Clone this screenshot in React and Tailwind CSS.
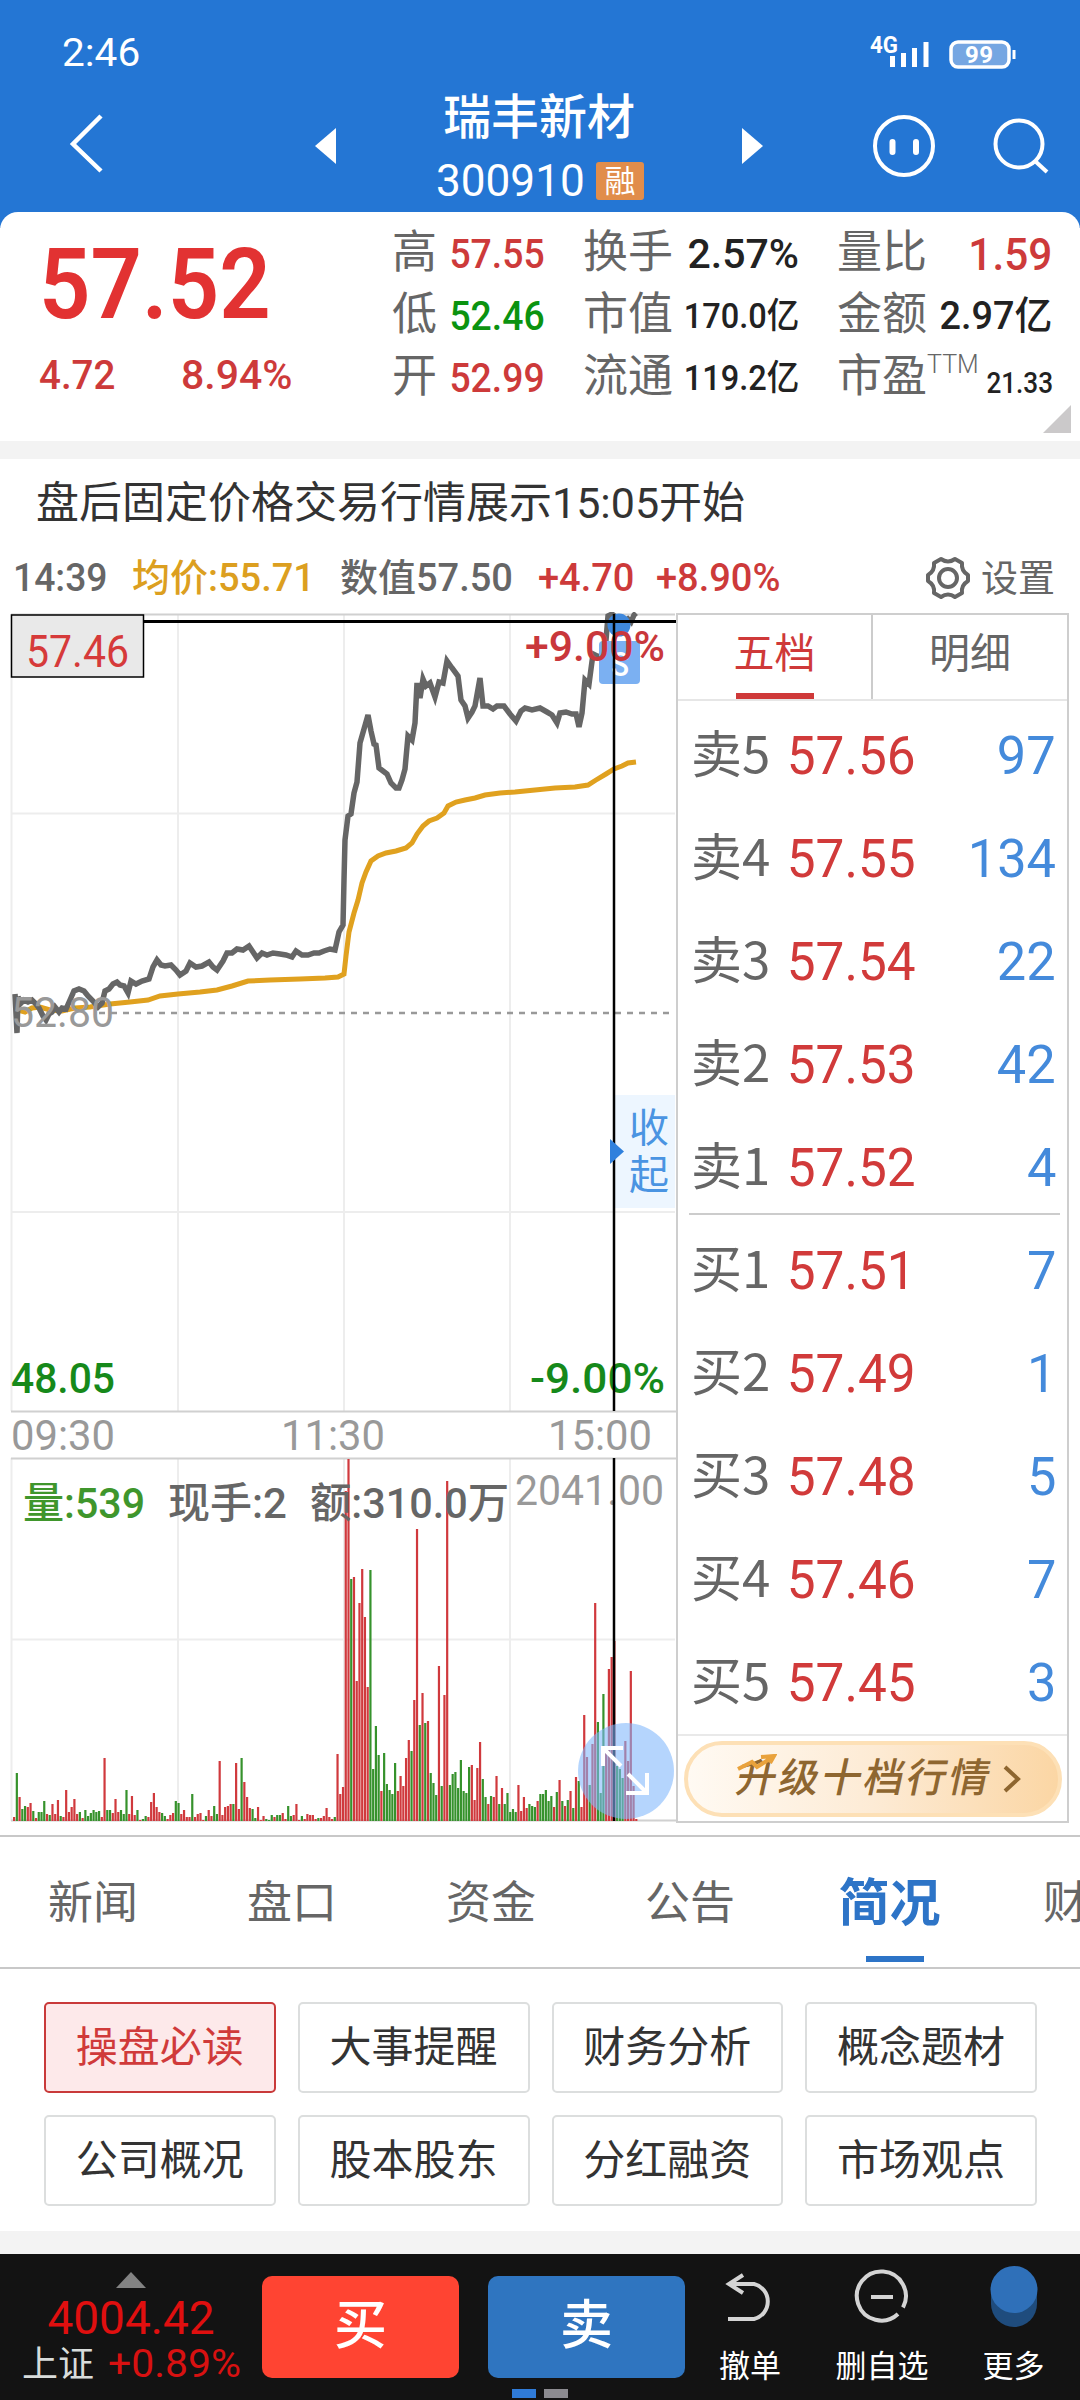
const STATS = [
  [
    { label: "高", value: "57.55", cls: "text-[41px] text-[#cd3a3a] scale-x-[.91]" },
    { label: "换手", value: "2.57%", cls: "text-[41px] text-[#222]" },
    { label: "量比", value: "1.59", cls: "text-[45px] text-[#cd3a3a] scale-x-[.94]" },
  ],
  [
    { label: "低", value: "52.46", cls: "text-[41px] text-[#0b9310] scale-x-[.91]" },
    { label: "市值", value: "170.0亿", cls: "text-[35px] text-[#222] scale-x-[.93]" },
    { label: "金额", value: "2.97亿", cls: "text-[39px] text-[#222] scale-x-[.97]" },
  ],
  [
    { label: "开", value: "52.99", cls: "text-[41px] text-[#cd3a3a] scale-x-[.91]" },
    { label: "流通", value: "119.2亿", cls: "text-[35px] text-[#222] scale-x-[.93]" },
    { label: "市盈", value: "21.33", sup: "TTM", cls: "relative top-[5px] text-[29px] text-[#222] scale-x-[.9]" },
  ],
];

const ORDERS = [
  ["卖5", "57.56", "97"],
  ["卖4", "57.55", "134"],
  ["卖3", "57.54", "22"],
  ["卖2", "57.53", "42"],
  ["卖1", "57.52", "4"],
  ["买1", "57.51", "7"],
  ["买2", "57.49", "1"],
  ["买3", "57.48", "5"],
  ["买4", "57.46", "7"],
  ["买5", "57.45", "3"],
];

const TABS = ["新闻", "盘口", "资金", "公告", "简况", "财务"];
const TOPICS = ["操盘必读", "大事提醒", "财务分析", "概念题材", "公司概况", "股本股东", "分红融资", "市场观点"];

// [x, y] pairs of the minute line, already in chart pixels
const PRICE =
  "15,994 17,1033 18,997 21,1003 24,1000 28,1002 32,1000 36,1004 39,1008 43,1016 46,1020 49,1014 52,1012 55,1007 59,1012 62,1008 66,1009 70,1000 74,991 79,989 84,991 88,996 93,1001 98,1007 102,1003 105,991 109,989 113,984 117,982 120,985 124,986 128,993 131,981 136,984 142,981 149,979 153,967 157,960 161,965 165,966 171,965 176,970 180,975 186,971 190,963 196,967 202,966 209,962 213,967 217,970 223,961 227,953 232,953 237,949 243,950 249,946 253,952 257,958 262,953 267,955 273,953 280,954 286,955 292,957 296,951 302,955 308,955 314,953 319,953 324,951 330,949 335,950 339,932 343,925 344,880 345,840 348,816 351,814 354,793 357,782 360,743 364,729 368,715 371,731 374,744 376,745 379,768 383,771 387,774 391,783 396,788 399,788 402,780 405,769 408,736 412,740 415,723 417,683 420,698 423,679 426,686 430,683 435,697 439,682 443,683 447,661 452,668 458,676 461,700 465,706 468,718 472,712 475,706 480,678 483,706 488,706 493,709 497,706 504,706 510,714 516,721 521,711 525,708 532,710 540,708 547,712 552,715 557,723 560,713 566,712 572,714 576,714 579,727 582,713 585,680 589,684 593,654 597,656 602,657 606,640 608,616 612,614 617,618 622,624 628,619 631,622 634,615 636,613";

const AVERAGE =
  "18,1010 25,1012 32,1008 40,1007 50,1010 62,1011 75,1008 90,1007 110,1004 130,1002 148,1000 160,996 178,994 200,992 217,990 232,986 248,981 270,980 300,979 325,978 338,977 344,974 346,956 349,932 354,913 358,900 362,883 366,872 371,861 378,856 386,853 396,851 406,848 412,843 417,834 423,826 429,821 437,818 444,813 448,806 456,802 465,800 475,798 485,795 500,793 515,792 535,790 555,788 575,787 588,785 596,780 606,774 614,769 622,766 628,763 636,762";

// one entry per minute, sign gives the colour: up is red, down is green
const VOLUME = [
  4, -48, 24, -12, -15, 14, 18, -10, 3, -9, -9, -20, 7, -6, 17, 7, 21, -5, 4, 31, 9, 14, 22, 7, -9, 3, -11, -5, -8, -11,
  -9, -10, 4, 63, -11, -11, 8, 22, 9, -11, -7, -31, 7, 25, 6, -11, 1, -2, -5, 4, 19, 28, 14, 9, -8, -5, 2, 6, 8, -20,
  -18, 7, 11, 4, 4, -27, 4, 7, 8, 1, -5, 11, 5, -15, -7, 60, 6, 14, 15, 17, -17, 58, 12, -63, 39, 24, 13, -12, -3, 14,
  1, 5, -2, -1, -6, 4, -6, -6, 8, 2, -15, -5, 6, 17, 1, -5, 2, 7, 6, 6, 2, -3, 3, 5, 13, 4, 2, -4, 67, 27,
  34, 330, 362, -242, 244, 140, 218, 252, 204, 134, -251, -52, -95, -66, 30, -68, -37, -31, -27, -58, 30, 45, 35, 63, 81,
  -70, 121, 292, -96, 128, -98, 100, -48, -38, -26, 155, -35, 126, 340, -36, -47, -49, -33, -61, -30, -28, -54, 56, 21,
  53, 79, -42, -24, 17, -25, 24, 45, -17, 33, -17, -28, -9, -12, -9, 36, 10, 24, 13, -17, -15, -14, 20, -27, -27, -31,
  -20, -25, 14, -29, 41, -20, 15, -21, 30, -13, 44, -40, 14, 106, 64, -36, 77, 218, -99, -28, -127, 75, 152, 164, 180,
  -55, -52, -43, 80, 60, 150, 35, 2,
];

function Label({ x, y, w, size = 42, fill, weight = 500, children }) {
  return (
    <text x={x} y={y} textLength={w} lengthAdjust="spacingAndGlyphs" fontSize={size} fontWeight={weight} fill={fill}>
      {children}
    </text>
  );
}

function StatusBar() {
  return (
    <div className="flex h-[104px] items-center justify-between pl-[62px] pr-[64px]">
      <span className="origin-left scale-x-[1.04] pt-[2px] text-[39px] leading-none font-[450]">2:46</span>
      <svg width="148" height="48" viewBox="868 26 148 48">
        <text x="870" y="51" textLength="28" lengthAdjust="spacingAndGlyphs" fontSize="24" fontWeight="700" fill="#fff">4G</text>
        <path d="M892.500 54V65M903.500 51V65M914.500 46V65M926 40V65" stroke="#fff" strokeWidth="5" />
        <rect x="951" y="40" width="58" height="25" rx="7" fill="#75a6e2" stroke="#fff" strokeWidth="3.500" />
        <path d="M1014 48v9" stroke="#fff" strokeWidth="3" />
        <text x="965" y="61" textLength="28" fontSize="24" fontWeight="700" fill="#fff">99</text>
      </svg>
    </div>
  );
}

function TitleBar() {
  return (
    <div className="flex h-[124px] items-start">
      <svg className="shrink-0" width="430" height="108" viewBox="0 104 430 108" fill="none">
        <path d="M101 116L73 144L101 171" stroke="#fff" strokeWidth="4.500" />
        <path d="M336 128V164L315 146Z" fill="#fff" />
      </svg>
      <div className="flex w-[220px] shrink-0 flex-col items-center">
        <h1 className="-mt-[12px] -ml-[2px] text-[48px] font-medium leading-[52px] whitespace-nowrap">瑞丰新材</h1>
        <div className="mt-[14px] flex items-center gap-[11px]">
          <span className="w-[149px] text-[45px] leading-[46px]">
            <span className="inline-block origin-left scale-x-[.98] font-[450]">300910</span>
          </span>
          <span className="flex h-[38px] w-[48px] items-center justify-center rounded-[3px] bg-[#e18d4b] text-[31px] leading-none">融</span>
        </div>
      </div>
      <svg className="shrink-0" width="430" height="108" viewBox="650 104 430 108" fill="none" stroke="#fff" strokeWidth="4">
        <path d="M742 128V164L763 146Z" fill="#fff" stroke="none" />
        <circle cx="904" cy="146" r="29" />
        <path d="M892.500 142v10M916 142v10" strokeWidth="6" strokeLinecap="round" />
        <circle cx="1019" cy="144" r="23.500" />
        <path d="M1035 161L1047 172" />
      </svg>
    </div>
  );
}

function Quote() {
  return (
    <section className="relative flex h-[229px] shrink-0 rounded-t-[18px] bg-white">
      <div className="w-[392px] shrink-0 pl-[39px] pt-[34px] font-medium text-[#e23232]">
        <div className="origin-left scale-x-[.92] text-[98px] font-semibold leading-[78px]">57.52</div>
        <div className="mt-[31px] flex text-[41px] leading-[40px] text-[#cd3a3a]">
          <span className="w-[142px] origin-left scale-x-[.94]">4.72</span>
          <span>8.94%</span>
        </div>
      </div>
      <div className="pt-[11px]">
        {STATS.map((row, r) => (
          <div key={r} className="grid h-[62px] grid-cols-[153px_216px_215px] gap-x-[38px] items-center">
            {row.map((s) => (
              <div key={s.label} className="flex items-center justify-between whitespace-nowrap">
                <span className="-mt-[4px] text-[45px] leading-none text-[#666]">{s.label}</span>
                {s.sup && <sup className="mr-auto -top-[13px] text-[25px] font-light text-[#666]">{s.sup}</sup>}
                <span className={`origin-right font-[470] leading-none ${s.cls}`}>{s.value}</span>
              </div>
            ))}
          </div>
        ))}
      </div>
      <svg className="absolute right-[9px] bottom-[8px]" width="28" height="28">
        <path d="M28 0V28H0Z" fill="#cbc9ca" />
      </svg>
    </section>
  );
}

function InfoBar() {
  return (
    <div className="flex h-[70px] items-center whitespace-nowrap text-[38px] leading-none font-medium text-[#666]">
      <div className="flex w-[920px] pl-[13px]">
        <span className="w-[119px]"><span className="inline-block origin-left scale-x-[.98]">14:39</span></span>
        <span className="w-[208px] text-[#dc9f20]">均价:55.71</span>
        <span className="w-[198px]">数值57.50</span>
        <span className="w-[118px] text-[#cd3a3a]">+4.70</span>
        <span className="text-[#cd3a3a]">+8.90%</span>
      </div>
      <svg width="56" height="44" viewBox="920 558 56 44" fill="none" stroke="#666" strokeWidth="4">
        <path d="M941 561Q948 566 955 561L962 565Q961 573 968 577V583Q961 587 962 595L955 599Q948 594 941 599L934 595Q935 587 928 583V577Q935 573 934 565Z" strokeLinejoin="round" />
        <circle cx="948" cy="580" r="9" />
      </svg>
      <span className="ml-[5px] pt-[3px] text-[37px] font-normal">设置</span>
    </div>
  );
}

function Chart() {
  return (
    <svg className="block shrink-0 font-[family-name:Roboto,'Noto_Sans_CJK_SC',sans-serif]" width="676" height="1212" viewBox="0 612 676 1212" fill="none">
      <path d="M11.500 614V1411M178 614V1411M344 614V1411M510 614V1411M11.500 1458V1821M178 1458V1821M344 1458V1821M510 1458V1821M11 813.500H675M11 1212H675M11 1639.500H675" stroke="#ededed" strokeWidth="2" />
      <path d="M11 614.500H675M11 1411.500H676M11 1458.500H676M11 1820.500H676" stroke="#d0d0d0" strokeWidth="2" />
      <path d="M99 1013H675" stroke="#999" strokeWidth="2.500" strokeDasharray="6 6" />

      {/* price lines */}
      <polyline points={AVERAGE} stroke="#e0a11f" strokeWidth="5" />
      <polyline points={PRICE} stroke="#666" strokeWidth="5.500" />

      {/* volume */}
      {VOLUME.map((v, i) => (
        <rect key={i} x={13 + i * 2.741} y={1821 - Math.abs(v)} width="2.2" height={Math.abs(v)} fill={v > 0 ? "#d0393d" : "#36922c"} />
      ))}

      {/* trade marker */}
      <rect x="599" y="641" width="41" height="43" rx="4" fill="#7bb0f2" />
      <Label x={611} y={676} w={18} size={34} fill="#fff">S</Label>
      <circle cx="619" cy="625" r="11.500" fill="#3f88dc" />

      <path d="M144 621.500H676" stroke="#000" strokeWidth="3" />
      <rect x="11.500" y="615" width="132" height="62" fill="#e9e9e9" stroke="#000" strokeWidth="1.500" />
      <Label x={26} y={667} w={103} size={45} weight={400} fill="#d63a3a">57.46</Label>
      <Label x={525} y={661} w={140} fill="#c9373b">+9.00%</Label>
      <Label x={11} y={1027} w={103} weight={400} fill="#999">52.80</Label>
      <Label x={11} y={1393} w={104} fill="#16891a">48.05</Label>
      <Label x={530} y={1393} w={135} fill="#16891a">-9.00%</Label>
      <Label x={11} y={1450} w={104} weight={450} fill="#999">09:30</Label>
      <Label x={281} y={1450} w={104} weight={450} fill="#999">11:30</Label>
      <Label x={548} y={1450} w={104} weight={450} fill="#999">15:00</Label>
      <Label x={23} y={1518} w={122} fill="#3f962c">量:539</Label>
      <Label x={168} y={1518} w={119} fill="#666">现手:2</Label>
      <Label x={310} y={1518} w={199} fill="#666">额:310.0万</Label>
      <Label x={515} y={1505} w={149} weight={450} fill="#999">2041.00</Label>

      {/* collapse handle */}
      <rect x="615" y="1095" width="60" height="113" fill="#edf6ff" />
      <Label x={629} y={1142} w={40} size={40} weight={400} fill="#4a94e2">收</Label>
      <Label x={629} y={1189} w={40} size={40} weight={400} fill="#4a94e2">起</Label>
      <path d="M614 614V1411M614 1458V1821" stroke="#000" strokeWidth="2.500" />
      <path d="M610 1139L624 1151.500L610 1164Z" fill="#2f80dd" />

      {/* fullscreen */}
      <circle cx="626" cy="1771" r="48" fill="#7fb7fb" fillOpacity=".58" />
      <path d="M603 1766V1748H623M603 1748L621 1766M628 1774L646 1792M626 1793H647V1773" stroke="#fff" strokeWidth="4" />
    </svg>
  );
}

function OrderBook() {
  return (
    <div className="mt-[1px] flex h-[1210px] w-[393px] flex-col border-2 border-[#cecece]">
      <div className="flex h-[86px] shrink-0 border-b-2 border-[#e6e6e6] text-[41px]">
        <div className="flex w-[195px] flex-col items-center border-r-2 border-[#ccc] text-[#cf3939]">
          <span className="h-[78px] leading-[78px]">五档</span>
          <span className="h-[6px] w-[78px] bg-[#cf3939]" />
        </div>
        <div className="flex-1 text-center leading-[78px] text-[#666]">明细</div>
      </div>
      <div className="flex-1 px-[11px] pt-[2px]">
        {ORDERS.map(([name, price, count], i) => (
          <div key={name} className="flow-root h-[103px]">
            {i === 5 && <div className="-mt-[5px] -mr-[4px] mb-[3px] h-[2px] bg-[#ccc]" />}
            <div className="flex h-full items-center pl-[2px] pt-[3px] leading-none">
              <span className="w-[89px] -mt-[9px] font-[family-name:'Noto_Sans_CJK_SC',sans-serif] text-[51px] text-[#666]">{name}</span>
              <span className="w-[136px] text-right text-[54px] font-[450] text-[#d13a3a]"><span className="inline-block origin-right scale-x-[.95]">{price}</span></span>
              <span className="flex-1 text-right text-[54px] font-[450] text-[#448adb]"><span className="inline-block origin-right scale-x-[.97]">{count}</span></span>
            </div>
          </div>
        ))}
      </div>
      <div className="flex h-[87px] shrink-0 items-center justify-center border-t-2 border-[#e9e9e9]">
        <div className="relative flex h-[76px] w-[378px] items-center justify-center rounded-full border-[4px] border-[#fde0b6] bg-linear-to-r from-[#fffaf3] via-[#fdebd5] to-[#fbd6a4]">
          <span className="ml-[13px] -skew-x-12 text-[40px] font-medium leading-none tracking-[2.500px] whitespace-nowrap text-[#8e6630]">升级十档行情</span>
          <svg className="ml-[11px]" width="18" height="28" fill="none">
            <path d="M2 2L15 14L2 26" stroke="#8e6630" strokeWidth="4" />
          </svg>
          <svg className="absolute left-[49px] top-[9px]" width="40" height="18" fill="none">
            <path d="M1 15L15 8L20 13L34 4M24 3L37 2L33 9" stroke="#e9a23c" strokeWidth="4" />
          </svg>
        </div>
      </div>
    </div>
  );
}

function Footer() {
  return (
    <footer className="relative flex h-[146px] shrink-0 bg-[#131313] text-white">
      <div className="flex w-[262px] flex-col items-center pt-[18px] leading-none">
        <svg width="30" height="16"><path d="M15 0L30 16H0Z" fill="#838383" /></svg>
        <span className="mt-[7px] text-[46px] text-[#e00f0f]">4004.42</span>
        <div className="mt-[4px] flex items-center gap-[14px] text-[36px] whitespace-nowrap">
          <span className="text-[#d8dcdb]">上证</span>
          <span className="w-[132px] text-[39px] text-[#d81111]"><span className="inline-block origin-left scale-x-[1.05]">+0.89%</span></span>
        </div>
      </div>
      <div className="flex gap-[29px] pt-[22px] text-[53px] font-medium">
        <button className="h-[102px] w-[197px] rounded-[10px] bg-[#ff4432]">买</button>
        <button className="h-[102px] w-[197px] rounded-[10px] bg-[#2f75c0]">卖</button>
      </div>
      <div className="flex flex-col items-center w-[130px] pt-[10px] text-[31px] leading-none">
        <svg width="60" height="64" viewBox="721 2264 60 64" fill="none" stroke="#d4d4d4" strokeWidth="4">
          <path d="M744 2275L730 2284L744 2293M730 2284H755A18 18 0 0 1 755 2319H729" />
        </svg>
        <span className="mt-[23px]">撤单</span>
      </div>
      <div className="flex flex-col items-center w-[134px] pt-[10px] text-[31px] leading-none">
        <svg width="60" height="64" viewBox="853 2264 60 64" fill="none" stroke="#d4d4d4" strokeWidth="4">
          <path d="M904 2307.500A24.500 24.500 0 1 0 899 2314M872 2297H894" />
        </svg>
        <span className="mt-[23px]">删自选</span>
      </div>
      <div className="flex flex-col items-center w-[129px] pt-[10px] text-[31px] leading-none">
        <svg width="60" height="64" viewBox="983 2264 60 64">
          <path d="M990 2290H1036V2304A23 23 0 0 1 990 2304Z" fill="#1f4c7d" />
          <circle cx="1013" cy="2289.500" r="23.500" fill="#2f70b9" />
        </svg>
        <span className="mt-[23px]">更多</span>
      </div>
      <div className="absolute bottom-[2px] left-[512px] flex gap-[8px]">
        <span className="h-[9px] w-[24px] bg-[#2f7bd8]" />
        <span className="h-[9px] w-[24px] bg-[#8c8b90]" />
      </div>
    </footer>
  );
}

export default function App() {
  return (
    <div className="flex h-[2400px] w-[1080px] flex-col overflow-hidden bg-white font-[family-name:Roboto,'Noto_Sans_CJK_SC',sans-serif]">
      <header className="-mb-[16px] h-[228px] shrink-0 bg-[#2476d4] text-white">
        <StatusBar />
        <TitleBar />
      </header>
      <Quote />
      <div className="h-[18px] shrink-0 bg-[#f3f3f3]" />
      <div className="h-[84px] shrink-0 pl-[36px] text-[43px] leading-[88px] text-[#333]">盘后固定价格交易行情展示15:05开始</div>
      <InfoBar />
      <div className="-mt-px flex h-[1212px] shrink-0">
        <Chart />
        <OrderBook />
      </div>
      <nav className="mt-[11px] flex h-[134px] shrink-0 overflow-hidden border-y-2 border-[#c8c8c8] text-[45px] leading-[133px] text-[#666]">
        {TABS.map((t) =>
          t === "简况" ? (
            <div key={t} className="flex w-[199px] shrink-0 flex-col items-center pr-[2px] text-[51px] font-bold text-[#2d74c7]">
              <span className="h-[119px] -ml-[10px]">{t}</span>
              <span className="h-[6px] w-[58px] bg-[#2d74c7]" />
            </div>
          ) : (
            <div key={t} className="w-[199px] shrink-0 pl-[48px]">{t}</div>
          )
        )}
      </nav>
      <div className="grid grid-cols-4 gap-[22px] pl-[44px] pr-[43px] pt-[33px] pb-[25px] text-[42px] text-[#333]">
        {TOPICS.map((t, i) => (
          <div
            key={t}
            className={`flex h-[91px] items-center justify-center rounded-[5px] border-2 leading-none ${i === 0 ? "border-[#c93a3a] bg-[#fde9ea] text-[#d03a3a]" : "border-[#dcdede]"}`}
          >
            {t}
          </div>
        ))}
      </div>
      <div className="flex-1 bg-[#f3f3f3]" />
      <Footer />
    </div>
  );
}
